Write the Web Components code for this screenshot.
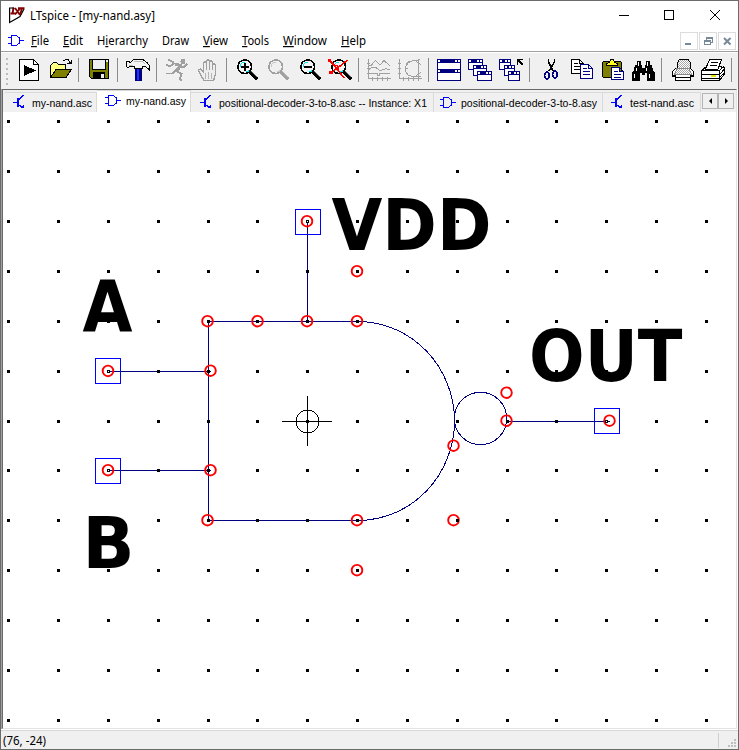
<!DOCTYPE html>
<html lang="en"><head><meta charset="utf-8"><title>LTspice - [my-nand.asy]</title>
<style>html,body{margin:0;height:100%;overflow:hidden}</style></head><body>
<app-window></app-window>
<script>
const P=(d,f='none',s='#000',w=1)=>`<path d="${d}" fill="${f}" stroke="${s}" stroke-width="${w}"/>`;
const R=(x,y,w,h,f)=>`<rect x="${x}" y="${y}" width="${w}" height="${h}" fill="${f}"/>`;
const C=(x,y,r,f,s,w=1)=>`<circle cx="${x}" cy="${y}" r="${r}" fill="${f}" stroke="${s}" stroke-width="${w}"/>`;
const N='#000080',G='#a0a0a0',O='#808000';
const win=(x,y,w,h)=>R(x,y,w,h,N)+R(x+1,y+4,w-2,h-5,'#fff')+R(x+1,y+1,2,2,'#fff')+R(x+w-3,y+1,2,2,'#fff')+R(x+w-6,y+1,2,2,'#fff');
const lens=(c,k,in1)=>C(8.7,8.7,6.8,c===G?'none':'#f4f4f4',c,1.6)+P('M4.5 8.5V6.5L6.5 4.5H9M9.5 13.5H12.5V12','none',k,1.4)+P('M14 14L21.5 21.5','none',c,3.4)+P('M15 13L21 19','none',c===G?'#ccc':'#999',.7)+(in1||'');
const page=(x,y,w,h,c)=>P(`M${x}.5 ${y}.5h${w-5}l4 4v${h-5}h${-w+1}zM${x+w-5}.5 ${y}.5v4h4`,'#fff',c)+P(`M${x+3} ${y+4}.5h${w-9}M${x+3} ${y+7}.5h${w-6}M${x+3} ${y+10}.5h${w-6}`,'none',c);
const ICONS={
 new:P('M.5 1.5H14.5L19.5 6.5V22.5H.5Z','#fff')+P('M14.5 1.5V6.5H19.5')+'<path d="M5 7L17 12.5L5 18Z"/>',
 open:P('M.5 18.5V7.5L3.5 4.5H6.5L8.5 6.5H15.5V11','#ffff80')+P('M.5 19.5L6 11.5H21.5L16 19.5Z',O)+P('M12.5 2.5H14.5M15 1.5H18L20.5 4.5')+P('M17 5.5H21.5V1.5M19 4.5H21'),
 save:P('M.5 1.5H19.5V20.5H2.5L.5 18.5Z',O)+R(4,2,12,9,'#efefef')+R(17,2,2,2,'#efefef')+P('M3.5 2V11.5H16.5V2')+R(4,14,12,7,'#000')+R(12,16,3,4,'#efefef'),
 hammer:R(10,9,7,14,N)+R(12,10,2,12,'#2030ff')+P('M1.5 3.5H3.5L5.5 4.5L8.5 1.5H18L22.5 5L24.5 8V12L20.5 8.5H17.5V10.5H9.5V8.5H5.5L2.5 9.5L1.5 8.5Z','#f4f4f4')+P('M9 3.5H17L20 5.5M3.5 7.5H8','none','#bbb'),
 run:P('M9.5 4.5L3 1.5M1 6.5L5 8.5L8.5 5.5H11L14.5 8L18.5 9.5L22 6M14 8L10.5 13L16.5 16L15 21L17 22.5M10.5 12L7.5 15.5H1','none',G,1.8)+P('M10.5 6L15 7.5L12 13','none',G,3)+C(18,3.5,2,G,G),
 hand:P('M5.5 21.5L1.5 15L.5 12L2.5 11L5.5 14V4.5L7 3.5L8.5 4.5V12V2.5L10 1.5L11.5 2.5V12V3.5L13 2.5L14.5 3.5V12V6.5L16 5.5L17.5 6.5V16L15.5 22.5H6Z','#eee',G,1.4)+P('M7 15V21M10 14V21M13 15V21','none','#b5b5b5'),
 zin:lens('#000','#00e5ee',P('M8.5 4.5V13M4.5 8.5H13','none','#000',2)),
 zoom:lens(G,'#c8c8c8'),
 zout:lens('#000','#00e5ee',P('M4.5 8.5H13','none','#000',2)),
 zfit:'<g transform="translate(2 0)">'+lens('#000','#00e5ee')+'</g>'+P('M1.5 2.5L7 8L16 20M19.5 2L12 8L2 15.5M9 7L11 14','none','#f00',1.5)+R(0,1,3,3,'#f00')+R(1,13,4,3,'#f00'),
 plot:P('M1.5 1V20.5H24M0 5.5H3M0 10.5H3M0 15.5H3M5.5 19V23M10.5 19V23M15.5 19V23M20.5 19V23M2 7.5H4L8.5 2.5L13 7L17 2.5L23 8M2 11.5L5 9.5H9L12 12H15L19 10.5L23 12M2 15.5H10V17.5H12V15.5H23','none',G),
 smith:P('M1.5 1V20.5H24M0 5.5H3M0 10.5H3M0 15.5H3M5.5 19V23M10.5 19V23M15.5 19V23M20.5 19V23M22 1.5L18 2.5H15L10 5L7.5 9V13L10 17L15 18.5H23M20.5 1V19M8 6L12 3M7 10H10M18 3L23 7M23 14L18 18','none',G),
 tile:win(0,1,24,12)+win(0,11,24,12),
 cascade:win(0,1,15,11)+win(5,7,14,11)+win(9,13,15,10),
 closeall:win(0,1,12,11)+win(5,7,11,11)+win(9,13,12,10)+P('M18.5 7V1.5H24M19 2L24 7','none','#000',1.5),
 cut:P('M4.5 1V4L9 13M10.5 1V4L5 13','none','#000',1.6)+`<ellipse cx="3" cy="17.5" rx="2.3" ry="3.5" fill="none" stroke="${N}" stroke-width="1.6"/><ellipse cx="11" cy="16.5" rx="2.3" ry="3.5" fill="none" stroke="${N}" stroke-width="1.6"/>`,
 copy:page(0,1,13,15,'#000')+page(9,6,13,15,N),
 paste:P('M1.5 3.5H18.5L19.5 4.5V19.5H1.5L.5 18.5V4.5Z',O)+P('M4.5 7.5V5.5L7.5 4.5L8.5 1.5H11.5L12.5 4.5L15.5 5.5V7.5Z','#ffff20')+page(9,9,13,13,N),
 find:'<path d="M5 3H9V7H10V10H13V7H14V3H18V7H20L21 12L23 15V23H15V15H13V17H10V15H8V23H0V15L2 12L3 7H5Z"/>'+P('M6.5 4V8M15.5 4V8M4.5 10V13M2.5 16V20M14 10V13M17.5 16V20','none','#fff'),
 preview:P('M5.5 11V4.5L7.5 1.5H16L18.5 4.5V11','url(#h)')+P('M.5 13.5L3.5 10.5H18.5L21.5 13.5V18.5H18.5V22H3.5V18.5H.5Z','#fff')+P('M5 10.5H17L19.5 16.5H2.5Z','url(#h)','#888')+P('M4 19.5H18M.5 17.5H4M18 17.5H22'),
 print:P('M.5 12.5L5.5 8.5H19L23.5 10V16L18.5 22.5H.5Z','#fff')+P('M4.5 11L8.5 1.5H20.5L17 11Z','#fff')+P('M10 4.5H17M9 7H16M0 12.5H18.5V22M18.5 12.5L23 8.5M0 16.5H18.5L23 11.5M0 20H18L23 15')+R(10,17,5,2,'#e8e800')
};
const GATE=P('M0 2.5H4M0 8.5H4M3.5 .5H8L11.5 3V8L8 10.5H3.5ZM11 5.5H16','none','#00f');
const TRANS=P('M0 7.5H4M4.5 3V12M10.5 0L5 5.5M5 9L10.5 13.5','none','#00f')+R(4,3,2,9,'#00f')+'<path d="M7 13H11V9Z" fill="#00f"/>';
const define=(n,css,html)=>customElements.define(n,class extends HTMLElement{
 connectedCallback(){const r=this.attachShadow({mode:'open'});r.innerHTML=`<style>:host{display:block;box-sizing:border-box}svg{display:block}${css}</style>`+(typeof html==='function'?html(this):html)}});

/* One line of UI text fitted to a set width; the "u" attribute underlines its access key. */
define('fit-text',':host{flex:none}svg{overflow:visible}text{white-space:pre}',e=>{
 const t=e.getAttribute('text'),u=+(e.getAttribute('u')??-1),w=e.getAttribute('w'),f=e.getAttribute('font')||'Noto Sans',s=e.getAttribute('size')||12;
 const b=u<0?t:`${t.slice(0,u)}<tspan text-decoration="underline">${t[u]}</tspan>${t.slice(u+1)}`;
 return `<svg width="${w}" height="16"><text x="0" y="12" textLength="${w}" lengthAdjust="spacingAndGlyphs" style='font:${s}px "${f}",sans-serif'>${b}</text></svg>`});

define('title-bar',':host{height:30px;display:flex;align-items:flex-start;padding:6px 0 0 8px}fit-text{margin:1px 0 0 5px}.c{margin-left:auto;padding:0 17px 0 0}',
 `<svg width="16" height="18">${P('M.6 1V15.5L11 9.5L15 2','#fff','#000',1.2)}${P('M4.5 .5L3.5 7M1.5 6.5H6.5M6 1L11 8M11.5 1L6 7.5M9 1.2H15.5M13 1.5L11 8','none','#800000',1.9)}${P('M0 1H5','none','#000',1)}</svg>
 <fit-text text="LTspice - [my-nand.asy]" w="125"></fit-text>
 <svg class="c" width="102" height="18" shape-rendering="crispEdges">${P('M0 8.5H10M45.5 3.5H54.5V12.5H45.5Z')}<path d="M91 3L101 13M101 3L91 13" stroke="#000" fill="none" shape-rendering="auto"/></svg>`);

define('mdi-button',':host{width:18px;height:18px;border:1px solid #dcdcdc;background:#fff}',e=>'<svg width="16" height="16" shape-rendering="crispEdges">'+({
 min:R(4,10,6,2,'#778899'),
 max:P('M6.5 7V4.5H12.5V9.5H10M4.5 7.5H10.5V11.5H4.5Z','none','#778899')+R(6,4,7,2,'#778899')+R(4,7,7,2,'#778899'),
 x:`<path d="M5 5L11.5 11.5M11.5 5L5 11.5" stroke="#778899" stroke-width="2" shape-rendering="auto"/>`})[e.getAttribute('kind')]+'</svg>');

define('menu-bar',':host{height:20px;display:flex;padding:0 2px 0 7px}.g{margin:4px 7px 0 0}fit-text{margin-top:2px;margin-right:var(--m)}.b{margin-left:auto;display:flex;gap:1px;margin-top:1px}',()=>{
 const m=[['File',18,31,0],['Edit',20,63,0],['Hierarchy',51,97,1],['Draw',27,162,-1],['View',25,203,0],['Tools',27,242,0],['Window',44,283,0],['Help',25,341,0]];
 return `<svg class="g" width="16" height="11" shape-rendering="crispEdges">${GATE}</svg>`+m.map((a,i)=>`<fit-text text="${a[0]}" w="${a[1]}" u="${a[3]}" style="--m:${m[i+1]?m[i+1][2]-a[2]-a[1]:0}px"></fit-text>`).join('')+'<div class="b"><mdi-button kind="min"></mdi-button><mdi-button kind="max"></mdi-button><mdi-button kind="x"></mdi-button></div>'});

define('tool-icon',':host{flex:none;width:24px;height:24px}:host([name="|"]){width:1px;background:#8c8c8c}svg{overflow:visible}',e=>{
 const n=e.getAttribute('name');return n==='|'?'':`<svg width="24" height="24" shape-rendering="crispEdges"><defs><pattern id="h" width="2" height="2" patternUnits="userSpaceOnUse"><rect width="2" height="2" fill="#fff"/><path d="M0 0h1v1H0zM1 1h1v1H1z" fill="#aaa"/></pattern></defs>${ICONS[n]}</svg>`});

define('tool-bar',':host{height:38px;background:#f0f0f0;border-top:1px solid #a0a0a0;box-shadow:inset 0 1px #fff;display:flex;padding:6px 0 0 5px}.g{width:2px;height:27px;background:repeating-linear-gradient(#bbb 0 2px,#f0f0f0 2px 5px)}tool-icon{margin-left:var(--m)}',()=>{
 const l=[['new',19],['open',50],['|',78],['save',89],['|',117],['hammer',125],['|',156],['run',165],['hand',198],['|',226],['zin',236],['zoom',267],['zout',299],['zfit',328],['|',358],['plot',367],['smith',398],['|',428],['tile',437],['cascade',468],['closeall',499],['|',529],['cut',544],['copy',571],['paste',602],['find',632],['|',661],['preview',672],['print',701],['|',731]];
 let end=8;return '<div class="g"></div>'+l.map(([n,x])=>{const m=x-end;end=x+(n==='|'?1:24);return `<tool-icon name="${n}" style="--m:${m}px"></tool-icon>`}).join('')});

define('doc-tab',':host{height:20px;margin-top:2px;display:flex;padding:2px 0 0 8px;background:#f0f0f0;border-right:1px solid #d9d9d9;border-top:1px solid #d9d9d9}:host([active]){height:22px;margin-top:0;background:#fff;padding-top:2px}svg{flex:none}',e=>{
 const g=e.hasAttribute('gate');return `<svg width="16" height="14" shape-rendering="crispEdges">${g?`<g transform="translate(0 2)">${GATE}</g>`:TRANS}</svg><fit-text style="margin-left:${g?5:3}px" text="${e.getAttribute('text')}" w="${e.getAttribute('w')}" size="11.5" font="Liberation Sans"></fit-text>`});

define('tab-strip',':host{height:22px;display:flex;background:#f0f0f0;padding-left:2px}.s{margin:3px 0 0 1px;display:flex}.s svg{width:16px;height:16px;box-sizing:border-box;border:1px solid #b4b4b4;background:#f0f0f0}',
 `<doc-tab text="my-nand.asc" w="60" style="width:92px"></doc-tab><doc-tab active gate text="my-nand.asy" w="60" style="width:94px"></doc-tab><doc-tab text="positional-decoder-3-to-8.asc -- Instance: X1" w="208" style="width:243px;padding-left:9px"></doc-tab><doc-tab gate text="positional-decoder-3-to-8.asy" w="136" style="width:169px;padding-left:6px"></doc-tab><doc-tab text="test-nand.asc" w="64" style="width:98px"></doc-tab>
 <div class="s"><svg><path d="M9 4V10L6 7Z"/></svg><svg><path d="M6 4V10L9 7Z"/></svg></div>`);

/* The drawing sheet; its coordinate system is that of the window. */
define('symbol-canvas',':host{flex:1;min-height:0;background:#fff}svg{width:733px;height:616px}text{font:bold 71px "DejaVu Sans",sans-serif}',()=>{
 const xs=[8,58,108,158,208,257,307,357,407,457,507,556,606,656,706],ys=[121,171,221,271,321,371,421,470,520,570,620,670,720];
 const dots=ys.flatMap(y=>xs.map(x=>R(x-1,y-1,3,3,'#000'))).join('');
 const circ=[[207.5,321],[257.5,321],[307,321],[357,321],[357,271],[307,221],[108,370.7],[210.5,370.5],[108,470],[210.5,470],[207.5,520],[357,520],[357,570],[453.5,445.5],[453.5,520],[506.5,392.5],[506.5,420.5],[609.5,420.5]].map(p=>`<circle cx="${p[0]}" cy="${p[1]+.2}" r="5.3" fill="none" stroke="#f00" stroke-width="1.9"/>`).join('');
 const boxes=[[95,358],[95,458],[295,209],[594,408]].map(b=>`<rect x="${b[0]+.5}" y="${b[1]+.5}" width="25" height="25" fill="none" stroke="#00f"/>`).join('');
 const pins=[[108,371],[108,470],[307,221],[606,421]].map(p=>R(p[0],p[1],1,1,'#fff')).join('');
 const t=(s,x,y,w)=>`<text x="${x}" y="${y}" textLength="${w}" lengthAdjust="spacingAndGlyphs">${s}</text>`;
 return `<svg viewBox="3 112 733 616">${t('A',82.5,331,50)}${t('B',82.5,568,52)}${t('VDD',331.5,250,160)}${t('OUT',529,381,153.5)}
 <g shape-rendering="crispEdges">${P('M208.5 520V321.5H357M208 520.5H357M108 371.5H211M108 470.5H211M307.5 221V321M507 421.5H610','none',N)}${P('M357 321.5C413 321.5 454.5 368 454.5 421S413 520.5 357 520.5','none',N)}${C(480.5,418.5,26.2,'none',N)}${C(307.5,421.5,11.5,'none','#000')}${P('M282 421.5H332M307.5 396V446')}${boxes}</g>${circ}<g shape-rendering="crispEdges">${dots}${pins}</g></svg>`});

define('status-bar',':host{height:19px;background:#f0f0f0;border-top:1px solid #d7d7d7;display:flex;padding-left:2px}svg{margin-left:auto}',
 `<fit-text text="(76, -24)" w="43" style="margin-top:2px"></fit-text><svg width="22" height="18">${R(2,2,1,15,'#d0d0d0')+[[18,8],[15,11],[18,11],[12,14],[15,14],[18,14]].map(p=>R(p[0],p[1],2,2,'#bfbfbf')).join('')}</svg>`);

define('app-window',':host{width:739px;height:750px;border:1px solid #6b6b6b;background:#fff;display:flex;flex-direction:column}.m{flex:1;min-height:0;display:flex;flex-direction:column;border:1px solid;border-color:#696969 #e3e3e3 #e3e3e3 #696969;margin:0 1px 1px;box-shadow:-1px 0 #a0a0a0;overflow:clip}',
 '<title-bar></title-bar><menu-bar></menu-bar><tool-bar></tool-bar><div class="m"><tab-strip></tab-strip><symbol-canvas></symbol-canvas></div><status-bar></status-bar>');
</script></body></html>
